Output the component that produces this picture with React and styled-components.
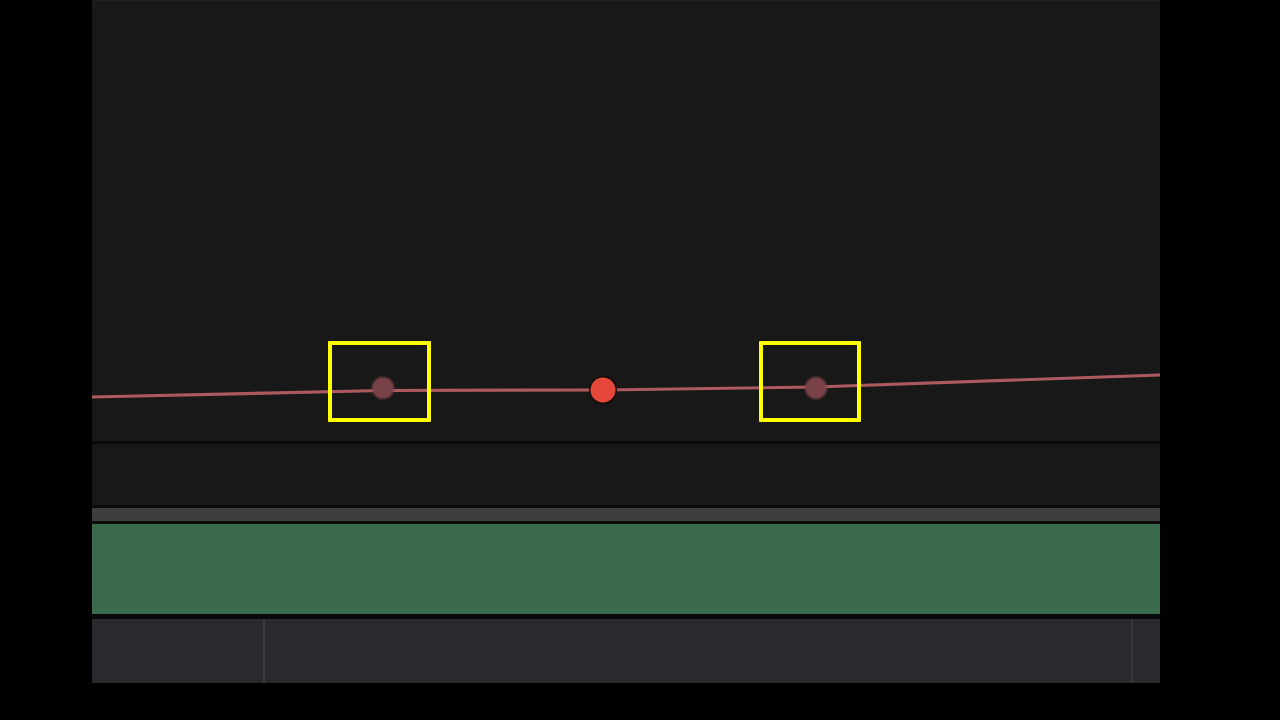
import React from "react";
import styled, { createGlobalStyle } from "styled-components";

const Global = createGlobalStyle`
  html, body {
    margin: 0;
    padding: 0;
    background: #000;
    font-family: "Liberation Sans", Arial, sans-serif;
  }
`;

const Page = styled.div`
  width: 1280px;
  height: 720px;
  background: #000;
  padding-left: 92px;
  box-sizing: border-box;
`;

const Panel = styled.div`
  width: 1068px;
  height: 683px;
  display: flex;
  flex-direction: column;
  background: #0b0b0b;
`;

const CurveArea = styled.div`
  position: relative;
  height: 441px;
  flex: none;
  background: #181818;
  border-top: 1px solid #212121;
  box-sizing: border-box;
`;

const CurveSvg = styled.svg`
  display: block;
  width: 100%;
  height: 100%;
`;

const Highlight = styled.div`
  position: absolute;
  border: 4px solid #ffff00;
  border-radius: 1px;
  box-sizing: border-box;
  width: ${(p) => p.w}px;
  height: ${(p) => p.h}px;
  left: ${(p) => p.x}px;
  top: ${(p) => p.y}px;
`;

const Divider = styled.div`
  height: ${(p) => p.h}px;
  flex: none;
  background: #0a0a0a;
`;

const EmptyRow = styled.div`
  height: 61px;
  flex: none;
  background: #181818;
`;

const GreyBar = styled.div`
  height: 13px;
  flex: none;
  background: #3d3d3d;
`;

const Clip = styled.div`
  height: 90px;
  flex: none;
  background: #3a6a4c;
`;

const Ruler = styled.div`
  flex: 1;
  display: grid;
  grid-template-columns: 171px 1fr 29px;
  background: #2a292e;
`;

const RulerCell = styled.div`
  border-left: ${(p) => (p.tick ? "2px solid #38373c" : "none")};
`;

const points = [
  [0, 396],
  [291, 389.5],
  [511, 389],
  [724, 386],
  [1068, 374],
];

export default function App() {
  const d = points.map((p, i) => `${i ? "L" : "M"}${p[0]} ${p[1]}`).join(" ");
  return (
    <Page>
      <Global />
      <Panel>
        <CurveArea>
          <CurveSvg viewBox="0 0 1068 440" preserveAspectRatio="none">
            <defs>
              <filter id="soft" x="-50%" y="-50%" width="200%" height="200%">
                <feGaussianBlur stdDeviation="0.8" />
              </filter>
            </defs>
            <path d={d} stroke="#ac5a60" strokeWidth="3.2" fill="none" />
            <circle cx="291" cy="387" r="11" fill="#7a4248" filter="url(#soft)" />
            <circle cx="724" cy="387" r="11" fill="#7a4248" filter="url(#soft)" />
            <circle cx="511" cy="389" r="14" fill="#1a0c0a" />
            <circle cx="511" cy="389" r="12.5" fill="#e5473a" />
          </CurveSvg>
          <Highlight x={236} y={340} w={103} h={81} />
          <Highlight x={667} y={340} w={102} h={81} />
        </CurveArea>
        <Divider h={3} />
        <EmptyRow />
        <Divider h={3} />
        <GreyBar />
        <Divider h={3} />
        <Clip />
        <Divider h={5} />
        <Ruler>
          <RulerCell />
          <RulerCell tick />
          <RulerCell tick />
        </Ruler>
      </Panel>
    </Page>
  );
}
